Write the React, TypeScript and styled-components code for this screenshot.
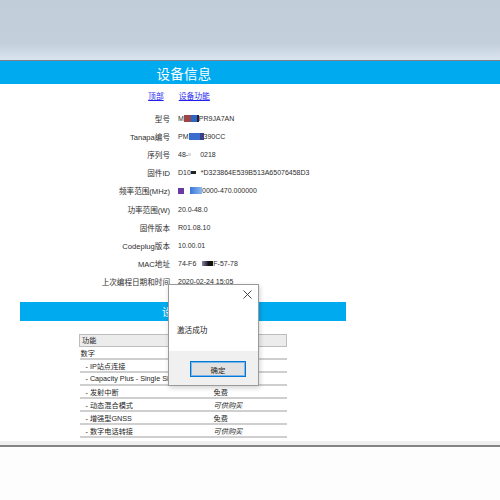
import styled, { createGlobalStyle } from 'styled-components';

const GlobalStyle = createGlobalStyle`
  html, body {
    margin: 0;
    padding: 0;
    background: #ffffff;
    font-family: "Liberation Sans", "Noto Sans CJK SC", sans-serif;
    color: #2a2a2a;
  }
`;

const Page = styled.div`
  position: relative;
  width: 500px;
  height: 500px;
  overflow: hidden;
  display: flex;
  flex-direction: column;
`;

const Banner = styled.div`
  height: 60px;
  flex: none;
  background: linear-gradient(#c1cdd9 0%, #c3cfdb 72%, #d9e4ef 100%);
  border-bottom: 1px solid #7b8189;
`;

const TopBar = styled.div`
  height: 23px;
  flex: none;
  background: #00aaef;
`;

const BarTitle = styled.div<{ $size: number }>`
  width: 368px;
  height: 100%;
  display: flex;
  align-items: center;
  justify-content: center;
  color: #ffffff;
  font-size: ${(p) => p.$size}px;
  letter-spacing: 0.2px;
`;

const Content = styled.div`
  width: 366px;
  flex: 1;
  display: flex;
  flex-direction: column;
`;

const Links = styled.nav`
  height: 22px;
  padding-right: 8px;
  display: flex;
  align-items: center;
  justify-content: center;
  gap: 15px;
`;

const Link = styled.a`
  color: #1f1fee;
  font-size: 7.8px;
  text-decoration: underline;
`;

const InfoGrid = styled.div`
  margin-top: 3px;
  display: grid;
  grid-template-columns: 170px 1fr;
  grid-auto-rows: 18.2px;
  column-gap: 8px;
  align-items: center;
  font-size: 7.6px;
`;

const Label = styled.div`
  text-align: right;
  white-space: nowrap;
  color: #2e2e2e;
`;

const Value = styled.div`
  display: flex;
  align-items: center;
  white-space: nowrap;
  font-size: 7px;
  color: #2e2e2e;
`;

const Blur = styled.span<{ $w: number; $bg: string; $h?: number; $gap?: number }>`
  display: inline-block;
  width: ${(p) => p.$w}px;
  height: ${(p) => p.$h ?? 7}px;
  background: ${(p) => p.$bg};
  margin-right: ${(p) => p.$gap ?? 0}px;
  filter: blur(0.4px);
`;

const SectionBar = styled.div`
  margin: 11px 20px 0 20px;
  height: 19px;
  background: #00aaef;
  display: flex;
  align-items: center;
  justify-content: center;
  color: #ffffff;
  font-size: 10.5px;
`;

const Table = styled.table`
  margin: 13px auto 0 79px;
  width: 208px;
  border-collapse: collapse;
  font-size: 7.2px;
  color: #262626;
`;

const HeadCell = styled.th`
  text-align: left;
  font-weight: normal;
  height: 11px;
  padding: 0 2px;
  background: #ececec;
  border: 1px solid #bdbdbd;
`;

const Row = styled.tr`
  height: 13px;
  border-bottom: 2px solid #cfcfcf;
`;

const Cell = styled.td<{ $indent?: boolean; $italic?: boolean }>`
  padding: 0 0 0 ${(p) => (p.$indent ? 6 : 1)}px;
  font-style: ${(p) => (p.$italic ? 'italic' : 'normal')};
  white-space: nowrap;
  overflow: hidden;
`;

const FeatureCell = styled(Cell)`
  width: 127px;
`;

const StatusStrip = styled.div`
  flex: none;
  height: 4px;
  margin-top: 3px;
  background: #efefef;
  border-bottom: 2px solid #848484;
`;

const Bottom = styled.div`
  flex: 1;
  background: #fdfdfd;
`;

const Dialog = styled.div`
  position: absolute;
  left: 168px;
  top: 284px;
  width: 89px;
  height: 100px;
  background: #ffffff;
  border: 1px solid #9a9a9a;
  box-shadow: 1px 2px 5px rgba(0, 0, 0, 0.18);
  display: flex;
  flex-direction: column;
`;

const DialogHead = styled.div`
  height: 18px;
  display: flex;
  justify-content: flex-end;
  align-items: center;
  padding-right: 6px;
`;

const DialogBody = styled.div`
  flex: 1;
  padding: 21px 0 0 8px;
  font-size: 7.6px;
  color: #202020;
`;

const DialogFoot = styled.div`
  height: 34px;
  background: #f0f0f0;
  display: flex;
  align-items: center;
  justify-content: flex-end;
  padding-right: 12px;
`;

const OkButton = styled.button`
  width: 56px;
  height: 16px;
  margin-top: 2px;
  padding: 0;
  border: 1px solid #0078d7;
  box-shadow: inset 0 0 0 1px #7fb6e8;
  background: #e1e1e1;
  font-family: "Liberation Sans", "Noto Sans CJK SC", sans-serif;
  font-size: 7.4px;
  color: #1e1e1e;
`;

const CloseIcon = () => (
  <svg width="9" height="9" viewBox="0 0 9 9">
    <path d="M0.5 0.5 L8.5 8.5 M8.5 0.5 L0.5 8.5" stroke="#333" strokeWidth="0.9" fill="none" />
  </svg>
);

const features: { name: string; status: string; indent: boolean; italic?: boolean }[] = [
  { name: '数字', status: '', indent: false },
  { name: '- IP站点连接', status: '', indent: true },
  { name: '- Capacity Plus - Single Site', status: '', indent: true },
  { name: '- 发射中断', status: '免费', indent: true },
  { name: '- 动态混合模式', status: '可供购买', indent: true, italic: true },
  { name: '- 增强型GNSS', status: '免费', indent: true },
  { name: '- 数字电话转接', status: '可供购买', indent: true, italic: true },
];

export default function App() {
  return (
    <>
      <GlobalStyle />
      <Page>
        <Banner />
        <TopBar>
          <BarTitle $size={13.5}>设备信息</BarTitle>
        </TopBar>
        <Content>
          <Links>
            <Link href="#top">顶部</Link>
            <Link href="#features">设备功能</Link>
          </Links>
          <InfoGrid>
            <Label>型号</Label>
            <Value>
              M
              <Blur $w={7} $bg="#9c4646" />
              <Blur $w={6} $bg="#2a68c4" />
              <Blur $w={2} $bg="#222233" />
              PR9JA7AN
            </Value>
            <Label>Tanapa编号</Label>
            <Value>
              PM
              <Blur $w={11} $bg="#3a6ecc" />
              <Blur $w={4} $bg="#3a3f88" />
              390CC
            </Value>
            <Label>序列号</Label>
            <Value>
              48-
              <Blur $w={3} $h={3} $bg="#dcdcdc" $gap={9} />
              0218
            </Value>
            <Label>固件ID</Label>
            <Value>
              D10
              <Blur $w={5} $h={3} $bg="#222" $gap={5} />
              *D323864E539B513A65076458D3
            </Value>
            <Label>频率范围(MHz)</Label>
            <Value>
              <Blur $w={6} $h={6} $bg="#6a3aa0" $gap={6} />
              <Blur $w={12} $bg="linear-gradient(90deg, #3a78d8, #8cbaf0)" />
              0000-470.000000
            </Value>
            <Label>功率范围(W)</Label>
            <Value>20.0-48.0</Value>
            <Label>固件版本</Label>
            <Value>R01.08.10</Value>
            <Label>Codeplug版本</Label>
            <Value>10.00.01</Value>
            <Label>MAC地址</Label>
            <Value>
              74-F6
              <Blur $w={6} $h={1} $bg="transparent" />
              <Blur $w={11} $h={5} $bg="linear-gradient(90deg, #8888aa, #111 60%)" />
              F-57-78
            </Value>
            <Label>上次编程日期和时间</Label>
            <Value>2020-02-24 15:05</Value>
          </InfoGrid>
          <SectionBar id="features">设备功能</SectionBar>
          <Table>
            <thead>
              <tr>
                <HeadCell>功能</HeadCell>
                <HeadCell></HeadCell>
              </tr>
            </thead>
            <tbody>
              {features.map((f) => (
                <Row key={f.name}>
                  <FeatureCell $indent={f.indent}>{f.name}</FeatureCell>
                  <Cell $italic={f.italic}>{f.status}</Cell>
                </Row>
              ))}
            </tbody>
          </Table>
        </Content>
        <StatusStrip />
        <Bottom />
        <Dialog>
          <DialogHead>
            <CloseIcon />
          </DialogHead>
          <DialogBody>激活成功</DialogBody>
          <DialogFoot>
            <OkButton>确定</OkButton>
          </DialogFoot>
        </Dialog>
      </Page>
    </>
  );
}
